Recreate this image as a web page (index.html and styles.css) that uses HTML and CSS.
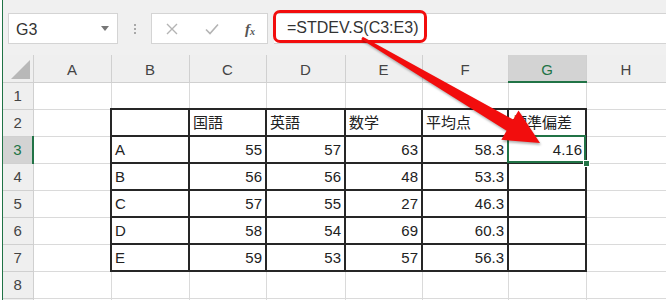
FILE: index.html
```html
<!DOCTYPE html>
<html lang="ja">
<head>
    <meta charset="UTF-8">
    <title>標準偏差</title>
    <link rel="stylesheet" href="styles.css">
</head>
<body>
    <div class="app">
        <!-- 数式バー -->
        <div class="toolbar">
            <div class="namebox"><span>G3</span><span class="caret"></span></div>
            <div class="grip"><i></i><i></i><i></i></div>
            <div class="fbuttons">
                <svg width="14" height="14" viewBox="0 0 14 14"><path d="M2 2L12 12M12 2L2 12" stroke="#b4b4b4" stroke-width="1.4" fill="none"/></svg>
                <svg width="16" height="14" viewBox="0 0 16 14"><path d="M2 7.5L6 11.5L14 2.5" stroke="#b4b4b4" stroke-width="1.6" fill="none"/></svg>
                <span class="fx">f<sub>x</sub></span>
            </div>
            <div class="formula">=STDEV.S(C3:E3)</div>
        </div>

        <!-- シート -->
        <table class="sheet">
            <colgroup>
                <col style="width:30px"><col style="width:78px"><col style="width:78px"><col style="width:77px"><col style="width:79px"><col style="width:77px"><col style="width:86px"><col style="width:78px"><col style="width:80px">
            </colgroup>
            <tr class="colhead">
                <th class="corner"></th><th>A</th><th>B</th><th>C</th><th>D</th><th>E</th><th>F</th><th class="cur">G</th><th>H</th>
            </tr>
            <tr><th>1</th><td></td><td></td><td></td><td></td><td></td><td></td><td></td><td></td></tr>
            <tr><th>2</th><td></td><td class="b"></td><td class="b">国語</td><td class="b">英語</td><td class="b">数学</td><td class="b">平均点</td><td class="b">標準偏差</td><td></td></tr>
            <tr><th class="cur">3</th><td></td><td class="b">A</td><td class="b n">55</td><td class="b n">57</td><td class="b n">63</td><td class="b n">58.3</td><td class="b n sel">4.16</td><td></td></tr>
            <tr><th>4</th><td></td><td class="b">B</td><td class="b n">56</td><td class="b n">56</td><td class="b n">48</td><td class="b n">53.3</td><td class="b"></td><td></td></tr>
            <tr><th>5</th><td></td><td class="b">C</td><td class="b n">57</td><td class="b n">55</td><td class="b n">27</td><td class="b n">46.3</td><td class="b"></td><td></td></tr>
            <tr><th>6</th><td></td><td class="b">D</td><td class="b n">58</td><td class="b n">54</td><td class="b n">69</td><td class="b n">60.3</td><td class="b"></td><td></td></tr>
            <tr><th>7</th><td></td><td class="b">E</td><td class="b n">59</td><td class="b n">53</td><td class="b n">57</td><td class="b n">56.3</td><td class="b"></td><td></td></tr>
            <tr><th>8</th><td></td><td></td><td></td><td></td><td></td><td></td><td></td><td></td></tr>
            <tr><th></th><td></td><td></td><td></td><td></td><td></td><td></td><td></td><td></td></tr>
        </table>

        <!-- 注目の枠と矢印 -->
        <div class="mark"></div>
        <svg class="arrow" width="666" height="300" viewBox="0 0 666 300">
            <polygon points="361.2,39.3 362.8,36.7 513.2,119.6 518.5,110.6 540,143 501.3,139.8 506.6,130.8" fill="#f20d0d"/>
        </svg>
    </div>
</body>
</html>
```

FILE: styles.css
```css
body {
    margin: 0;
    width: 666px;
    height: 300px;
    overflow: hidden;
    background-color: #fff;
    font-family: "Liberation Sans", "Noto Sans CJK JP", sans-serif;
    color: #222;
}

.app {
    position: relative;
    margin-left: 2px;
    border-left: 1px solid #217346;
    height: 300px;
    background-color: #f0f0f0;
}

.toolbar {
    display: flex;
    align-items: flex-start;
    height: 55px;
    padding-top: 13px;
    box-sizing: border-box;
}

.namebox {
    margin-left: 5px;
    width: 110px;
    height: 31px;
    box-sizing: border-box;
    background-color: #fff;
    border: 1px solid #d4d4d4;
    display: flex;
    align-items: center;
    justify-content: space-between;
    padding: 3px 8px 0 7px;
    font-size: 16px;
    color: #333;
}

.caret {
    width: 0;
    height: 0;
    border-left: 4px solid transparent;
    border-right: 4px solid transparent;
    border-top: 5px solid #777;
    margin-bottom: 4px;
}

.grip {
    width: 33px;
    height: 31px;
    display: flex;
    flex-direction: column;
    align-items: center;
    justify-content: center;
    gap: 2px;
}

.grip i {
    width: 2px;
    height: 2px;
    background-color: #a8a8a8;
}

.fbuttons {
    width: 117px;
    height: 31px;
    box-sizing: border-box;
    background-color: #fff;
    border: 1px solid #d4d4d4;
    display: flex;
    align-items: center;
    justify-content: space-between;
    padding: 1px 12px 0 13px;
}

.fx {
    font-family: "Liberation Serif", serif;
    font-style: italic;
    font-weight: bold;
    font-size: 15px;
    color: #555;
}

.fx sub {
    font-size: 10px;
    vertical-align: -1px;
}

.formula {
    flex: 1;
    margin-left: 6px;
    height: 31px;
    box-sizing: border-box;
    background-color: #fff;
    border-top: 1px solid #d4d4d4;
    border-bottom: 1px solid #d4d4d4;
    padding: 5px 0 0 13px;
    font-size: 16px;
    color: #333;
}

.sheet {
    table-layout: fixed;
    width: 663px;
    border-collapse: collapse;
    background-color: #fff;
    font-size: 15px;
}

.sheet tr {
    height: 27px;
}

.sheet th {
    background-color: #efefef;
    border: 1px solid #d0d0d0;
    font-weight: normal;
    color: #444;
    padding: 0;
    text-align: center;
}

.sheet .colhead th {
    border-top: none;
    padding-top: 2px;
}

.sheet tr th:first-child {
    border-left: none;
}

.sheet .corner {
    position: relative;
}

.sheet .corner::after {
    content: "";
    position: absolute;
    right: 3px;
    bottom: 3px;
    width: 0;
    height: 0;
    border-left: 19px solid transparent;
    border-bottom: 19px solid #b8b8b8;
}

.sheet th.cur {
    background-color: #d3d3d3;
    color: #217346;
}

.sheet .colhead th.cur {
    border-bottom: 2px solid #217346;
}

.sheet tr th.cur:first-child {
    border-right: 2px solid #217346;
}

.sheet td {
    border: 1px solid #dadada;
    padding: 0 3px 3px 3px;
    vertical-align: bottom;
    line-height: 18px;
    white-space: nowrap;
    overflow: hidden;
}

.sheet td.b {
    border: 2px solid #262626;
}

.sheet td.n {
    text-align: right;
}

.sheet td.sel {
    position: relative;
    overflow: visible;
}

.sheet td.sel::before {
    content: "";
    position: absolute;
    left: -2px;
    top: -2px;
    right: -1px;
    bottom: -1px;
    border: 2px solid #217346;
}

.sheet td.sel::after {
    content: "";
    position: absolute;
    right: -5px;
    bottom: -5px;
    width: 5px;
    height: 5px;
    background-color: #217346;
    border: 1px solid #fff;
}

.mark {
    position: absolute;
    left: 270px;
    top: 10px;
    width: 154px;
    height: 33px;
    box-sizing: border-box;
    border: 3px solid #f20d0d;
    border-radius: 7px;
}

.arrow {
    position: absolute;
    left: -3px;
    top: 0;
    filter: drop-shadow(1px 2px 1px rgba(0, 0, 0, 0.3));
}
```
